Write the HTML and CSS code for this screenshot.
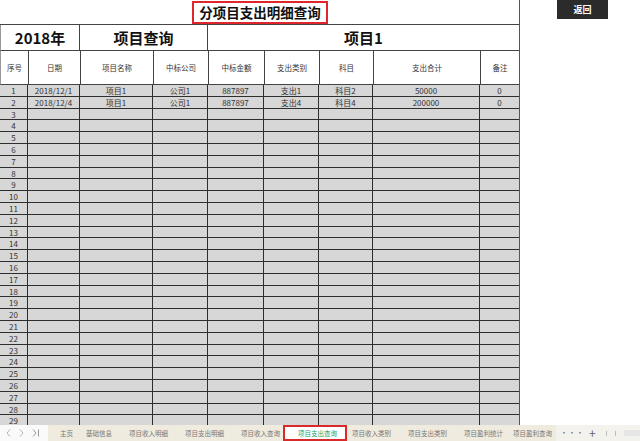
FILE: index.html
```html
<!DOCTYPE html>
<html lang="zh-CN">
<head>
    <meta charset="UTF-8">
    <title>分项目支出明细查询</title>
    <link rel="stylesheet" href="styles.css">
</head>
<body>
    <div class="screen">
        <div class="main">
            <div class="sheet">
                <div class="title-row">
                    <div class="title">分项目支出明细查询</div>
                </div>
                <div class="head-row">
                    <div class="head-cell w-year">2018年</div>
                    <div class="head-cell w-query">项目查询</div>
                    <div class="head-cell w-proj">项目1</div>
                </div>
                <div class="row cols">
                    <span>序号</span><span>日期</span><span>项目名称</span><span>中标公司</span><span>中标金额</span><span>支出类别</span><span>科目</span><span>支出合计</span><span>备注</span>
                </div>
                <div class="rows">
                    <div class="row"><span>1</span><span>2018/12/1</span><span>项目1</span><span>公司1</span><span>887897</span><span>支出1</span><span>科目2</span><span>50000</span><span>0</span></div>
                    <div class="row"><span>2</span><span>2018/12/4</span><span>项目1</span><span>公司1</span><span>887897</span><span>支出4</span><span>科目4</span><span>200000</span><span>0</span></div>
                    <div class="row"><span>3</span><span></span><span></span><span></span><span></span><span></span><span></span><span></span><span></span></div>
                    <div class="row"><span>4</span><span></span><span></span><span></span><span></span><span></span><span></span><span></span><span></span></div>
                    <div class="row"><span>5</span><span></span><span></span><span></span><span></span><span></span><span></span><span></span><span></span></div>
                    <div class="row"><span>6</span><span></span><span></span><span></span><span></span><span></span><span></span><span></span><span></span></div>
                    <div class="row"><span>7</span><span></span><span></span><span></span><span></span><span></span><span></span><span></span><span></span></div>
                    <div class="row"><span>8</span><span></span><span></span><span></span><span></span><span></span><span></span><span></span><span></span></div>
                    <div class="row"><span>9</span><span></span><span></span><span></span><span></span><span></span><span></span><span></span><span></span></div>
                    <div class="row"><span>10</span><span></span><span></span><span></span><span></span><span></span><span></span><span></span><span></span></div>
                    <div class="row"><span>11</span><span></span><span></span><span></span><span></span><span></span><span></span><span></span><span></span></div>
                    <div class="row"><span>12</span><span></span><span></span><span></span><span></span><span></span><span></span><span></span><span></span></div>
                    <div class="row"><span>13</span><span></span><span></span><span></span><span></span><span></span><span></span><span></span><span></span></div>
                    <div class="row"><span>14</span><span></span><span></span><span></span><span></span><span></span><span></span><span></span><span></span></div>
                    <div class="row"><span>15</span><span></span><span></span><span></span><span></span><span></span><span></span><span></span><span></span></div>
                    <div class="row"><span>16</span><span></span><span></span><span></span><span></span><span></span><span></span><span></span><span></span></div>
                    <div class="row"><span>17</span><span></span><span></span><span></span><span></span><span></span><span></span><span></span><span></span></div>
                    <div class="row"><span>18</span><span></span><span></span><span></span><span></span><span></span><span></span><span></span><span></span></div>
                    <div class="row"><span>19</span><span></span><span></span><span></span><span></span><span></span><span></span><span></span><span></span></div>
                    <div class="row"><span>20</span><span></span><span></span><span></span><span></span><span></span><span></span><span></span><span></span></div>
                    <div class="row"><span>21</span><span></span><span></span><span></span><span></span><span></span><span></span><span></span><span></span></div>
                    <div class="row"><span>22</span><span></span><span></span><span></span><span></span><span></span><span></span><span></span><span></span></div>
                    <div class="row"><span>23</span><span></span><span></span><span></span><span></span><span></span><span></span><span></span><span></span></div>
                    <div class="row"><span>24</span><span></span><span></span><span></span><span></span><span></span><span></span><span></span><span></span></div>
                    <div class="row"><span>25</span><span></span><span></span><span></span><span></span><span></span><span></span><span></span><span></span></div>
                    <div class="row"><span>26</span><span></span><span></span><span></span><span></span><span></span><span></span><span></span><span></span></div>
                    <div class="row"><span>27</span><span></span><span></span><span></span><span></span><span></span><span></span><span></span><span></span></div>
                    <div class="row"><span>28</span><span></span><span></span><span></span><span></span><span></span><span></span><span></span><span></span></div>
                    <div class="row"><span>29</span><span></span><span></span><span></span><span></span><span></span><span></span><span></span><span></span></div>
                </div>
            </div>
            <div class="side">
                <div class="back-btn">返回</div>
            </div>
        </div>

        <div class="tab-bar">
            <div class="tab-nav">
                <svg width="48" height="16" viewBox="0 0 48 16">
                    <polyline points="10,4.5 7,8 10,11.5" fill="none" stroke="#b4b4b4" stroke-width="1"/>
                    <polyline points="20,4.5 23,8 20,11.5" fill="none" stroke="#b4b4b4" stroke-width="1"/>
                    <polyline points="33,4.5 36,8 33,11.5" fill="none" stroke="#9a9a9a" stroke-width="1"/>
                    <line x1="38.5" y1="4.5" x2="38.5" y2="11.5" stroke="#9a9a9a" stroke-width="1"/>
                </svg>
            </div>
            <div class="tabs">
                <span class="tab first">主页</span>
                <span class="tab">基础信息</span>
                <span class="tab">项目收入明细</span>
                <span class="tab">项目支出明细</span>
                <span class="tab">项目收入查询</span>
                <span class="tab active">项目支出查询</span>
                <span class="tab">项目收入类别</span>
                <span class="tab">项目支出类别</span>
                <span class="tab">项目盈利统计</span>
                <span class="tab last">项目盈利查询</span>
            </div>
            <div class="tab-more">···</div>
            <div class="tab-add">+</div>
            <div class="scroll">
                <span class="grip"></span><span class="grip"></span>
                <span class="scroll-track"></span>
            </div>
        </div>
    </div>
</body>
</html>
```

FILE: styles.css
```css
* {
    box-sizing: border-box;
    margin: 0;
    padding: 0;
}

body {
    background: #ffffff;
    font-family: "Noto Sans CJK SC", "Noto Sans", sans-serif;
    color: #333;
}

.screen {
    width: 640px;
    height: 441px;
    display: flex;
    flex-direction: column;
    overflow: hidden;
}

.main {
    height: 425px;
    flex-shrink: 0;
    display: flex;
    overflow: hidden;
}

/* 表格区域 */
.sheet {
    width: 520px;
    flex-shrink: 0;
    border-right: 1px solid #555;
}

.title-row {
    height: 25px;
    border-bottom: 1px solid #444;
    display: flex;
    justify-content: center;
    padding-top: 1px;
    padding-left: 1px;
}

.title {
    width: 136px;
    height: 23px;
    border: 2px solid #e0262c;
    font-size: 13.5px;
    font-weight: bold;
    line-height: 19px;
    text-align: center;
    color: #111;
}

.head-row {
    height: 26px;
    display: flex;
    border-bottom: 1px solid #444;
    border-left: 1px solid #999;
}

.head-cell {
    display: flex;
    align-items: center;
    justify-content: center;
    font-size: 15px;
    font-weight: bold;
    color: #111;
    border-right: 1px solid #444;
}

.w-year { width: 79px; }
.w-query { width: 128px; }
.w-proj { flex: 1; border-right: none; }

.row {
    display: grid;
    grid-template-columns: 28px 52px 73px 55px 56px 55px 54px 107px 1fr;
    height: 11.8px;
    border-bottom: 1px solid #2e2e2e;
    background: #d7d7d7;
}

.row span {
    border-right: 1px solid #2e2e2e;
    padding-top: 1px;
    font-size: 8px;
    line-height: 10px;
    text-align: center;
    white-space: nowrap;
    overflow: hidden;
}

.row span:last-child {
    border-right: none;
}

.row.cols {
    height: 34px;
    background: #fff;
    border-bottom: 1px solid #444;
    border-left: 1px solid #999;
}

.row.cols span {
    padding-top: 0;
    font-size: 7.5px;
    line-height: 33px;
    border-right-color: #444;
}

/* 右侧按钮 */
.side {
    flex: 1;
}

.back-btn {
    width: 51px;
    height: 19px;
    margin-left: 37px;
    background: #2b2b2b;
    color: #fff;
    font-size: 9px;
    font-weight: bold;
    line-height: 19px;
    text-align: center;
}

/* 底部工作表标签 */
.tab-bar {
    height: 16px;
    display: flex;
    align-items: center;
    background: #f4f2ec;
    font-size: 6.5px;
    color: #777;
}

.tab-nav {
    width: 48px;
    height: 16px;
    flex-shrink: 0;
    background: #fafafa;
}

.tab-nav svg {
    display: block;
}

.tabs {
    width: 508px;
    height: 16px;
    flex-shrink: 0;
    display: flex;
    align-items: center;
    padding-left: 3.5px;
    overflow: hidden;
    background: #efebdf;
}

.tab {
    flex-shrink: 0;
    padding: 0 8.5px;
    line-height: 16px;
    white-space: nowrap;
}

.tab.first {
    padding-right: 4.5px;
}

.tab.last {
    padding-left: 1.5px;
}

.tab.active {
    height: 16px;
    padding: 0 8px 0 13px;
    margin: 0 -3.5px 0 -5.5px;
    line-height: 13px;
    background: #fff;
    border: 2px solid #d92a2a;
    color: #21a366;
}

.tab-more {
    flex-shrink: 0;
    padding-left: 4px;
    font-size: 8px;
    line-height: 16px;
    color: #777;
}

.tab-add {
    flex-shrink: 0;
    padding-left: 5px;
    font-size: 12px;
    line-height: 16px;
    color: #666;
}

.scroll {
    flex: 1;
    height: 16px;
    display: flex;
    align-items: center;
    gap: 8px;
    padding-left: 8px;
    margin-left: 2px;
}

.grip {
    width: 1px;
    height: 5px;
    background: #bbb;
}

.scroll-track {
    flex: 1;
    height: 6px;
    background: #e6e6e6;
}
```
